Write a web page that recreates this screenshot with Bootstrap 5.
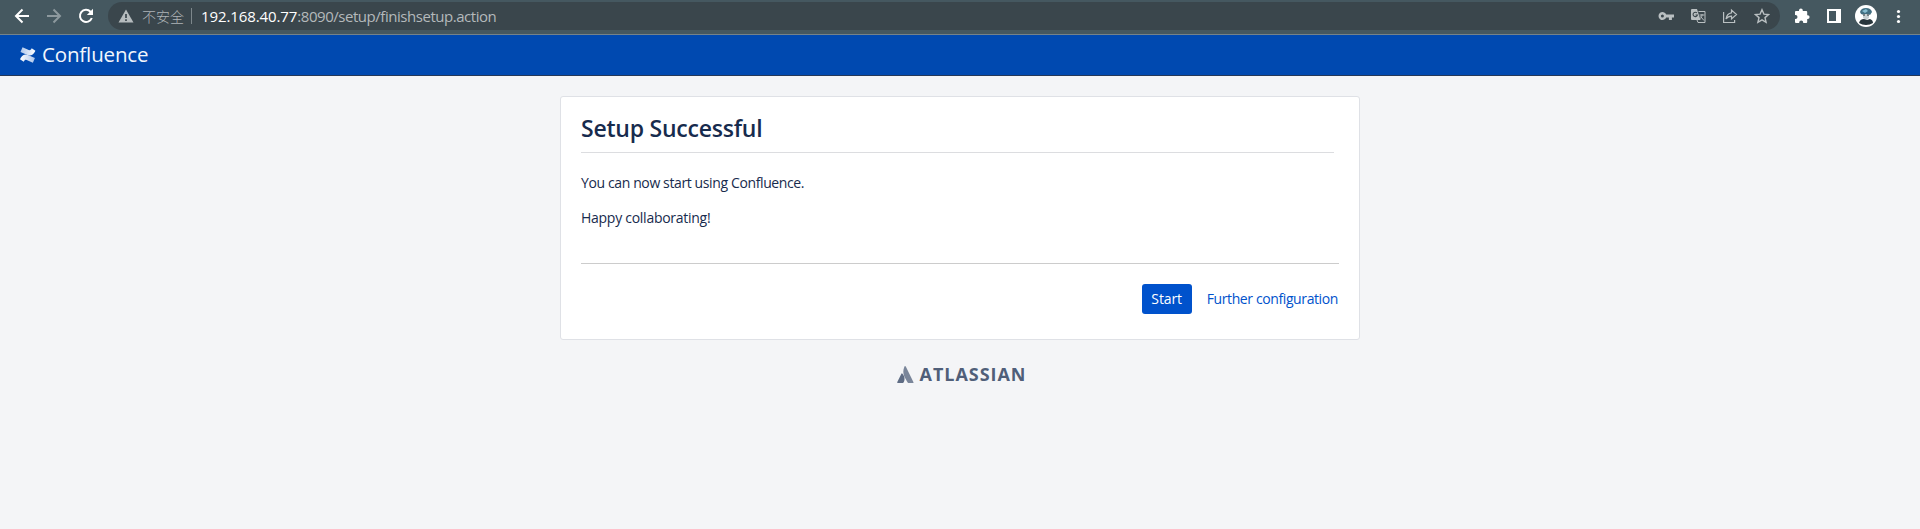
<!DOCTYPE html>
<html lang="en">
<head>
<meta charset="utf-8">
<title>Setup Successful - Confluence</title>
<link href="https://cdn.jsdelivr.net/npm/bootstrap@5.3.0/dist/css/bootstrap.min.css" rel="stylesheet">
<style>
body{font-family:"Open Sans","Noto Sans CJK SC",sans-serif;background:#f4f5f7;color:#172b4d;font-size:14px;line-height:20px;overflow:hidden}
svg{display:block;flex:none}
.toolbar{height:35px;background:#455860;border-bottom:1px solid #74838a;padding-left:14px;padding-bottom:2px}
.omnibox{width:1672px;height:28px;border-radius:14px;background:#3a464c;margin-left:14px;padding:0 10px;color:#b4b9bb;font-size:15px}
.insecure{font-family:"Noto Sans CJK SC",sans-serif;font-size:14px;margin-left:8px;color:#aeb4b7;font-weight:300}
.divider{width:1px;height:16px;background:#7d878b;margin:0 9px 0 7px}
.url{letter-spacing:-.46px;padding-bottom:1px}
.host{color:#fff;letter-spacing:-.1px}
.extensions{margin-left:14px}
.avatar-icon,.menu-icon{margin-left:13px}
.app-header{height:41px;background:#0049b0;border-bottom:1px solid #253858;padding-left:20px;color:#f2f6fc}
.product{font-size:20.5px;letter-spacing:-.15px;margin-left:6px;padding-bottom:2px}
.setup-panel{width:800px;height:244px;margin-top:20px;border:1px solid #dfe1e6;border-radius:3px;padding:0 20px}
.setup-panel h1{font-size:23px;line-height:28px;font-weight:600;letter-spacing:-.23px;margin:17px 5px 0 0;height:39px;border-bottom:1px solid #dcdde0}
.setup-panel p{letter-spacing:-.27px;margin:0 0 15px}
.setup-panel .first-line{padding-top:20px;letter-spacing:-.38px}
.actions{border-top:1px solid #ccc;padding-top:20px;margin-top:35px;padding-right:1px;gap:15px}
.btn-start{width:50px;height:30px;padding:0;font-size:14px;letter-spacing:-.1px;line-height:26px;border-radius:3px;background:#0052cc;color:#fff}
.more{color:#0052cc;letter-spacing:-.39px}
.maker{margin-top:24px;padding-left:3px;color:#505f79;font-size:18px;font-weight:700}
.maker-name{margin-left:6px;letter-spacing:.95px}
</style>
<script src="https://cdn.jsdelivr.net/npm/bootstrap@5.3.0/dist/js/bootstrap.bundle.min.js"></script>
</head>
<body>
<div class="toolbar d-flex align-items-center">
  <svg width="16" height="16" viewBox="0 0 16 16" fill="none" stroke="#fff" stroke-width="2"><path d="M15 8H2M8.500 1.500 2 8l6.500 6.500"/></svg>
  <svg class="ms-3" width="16" height="16" viewBox="0 0 16 16" fill="none" stroke="#8d999e" stroke-width="2"><path d="M1 8h13M7.500 1.500 14 8l-6.500 6.500"/></svg>
  <svg class="ms-3" width="16" height="16" viewBox="0 0 16 16"><path d="M13.800 10a6.100 6.100 0 1 1-1.300-6.300L14 5.200" fill="none" stroke="#fff" stroke-width="2"/><path d="M15 .8V7H8.800z" fill="#fff"/></svg>
  <div class="omnibox d-flex align-items-center">
    <svg width="16" height="16" viewBox="0 0 16 16"><path d="M8 1.500 15.500 14.500H.5z" fill="#b6bcbe"/><path d="M8 6v4M8 11.300v1.700" stroke="#3a464c" stroke-width="1.700"/></svg>
    <span class="insecure">不安全</span><span class="divider"></span>
    <span class="url"><span class="host">192.168.40.77</span>:8090/setup/finishsetup.action</span>
    <div class="d-flex align-items-center gap-3 ms-auto">
      <svg width="16" height="16" viewBox="0 0 16 16"><path fill-rule="evenodd" d="M8.200 6.500a4 4 0 1 0 0 3h2.700V12h3V9.500H16v-3zM4.400 6.500a1.500 1.500 0 1 1 0 3 1.500 1.500 0 0 1 0-3z" fill="#b9bfc1"/></svg>
      <svg width="16" height="16" viewBox="0 0 16 16"><path d="M2 1h5l3.500 11H2a1 1 0 0 1-1-1V2a1 1 0 0 1 1-1z" fill="#b9bfc1"/><path d="M8.500 3.500H15v11H8L7 12M9.500 7h5M12 6v1c0 2-1.500 3.500-2.500 4M10.500 8.500l3.500 4" fill="none" stroke="#b9bfc1"/><path d="M7 5a2.200 2.200 0 1 0 .4 2H5.500" fill="none" stroke="#3a464c" stroke-width="1.100"/></svg>
      <svg width="16" height="16" viewBox="0 0 16 16" fill="none" stroke="#b9bfc1" stroke-width="1.200"><path d="M1.600 4v10.500h11V12M9.500 2v2.800C6 5.300 4.500 7.500 4 11c1.500-2 3.300-2.800 5.500-2.800V11l5-4.500z"/></svg>
      <svg width="16" height="16" viewBox="0 0 16 16"><path d="m8 1.700 1.900 4.400 4.700.4-3.600 3.100 1.100 4.700L8 11.800l-4.100 2.500L5 9.600 1.400 6.500l4.700-.4z" fill="none" stroke="#b9bfc1" stroke-width="1.400"/></svg>
    </div>
  </div>
  <svg class="extensions" width="16" height="16" viewBox="0 0 16 16"><path d="M5 3V2.500a1.900 1.900 0 0 1 3.800 0V3h3.400a1 1 0 0 1 1 1v3.200h.5a1.900 1.900 0 0 1 0 3.800h-.5v3a1 1 0 0 1-1 1H9.200v-.5a2 2 0 0 0-4 0v.5H2a1 1 0 0 1-1-1v-3h.5a2 2 0 0 0 0-4H1V4a1 1 0 0 1 1-1z" fill="#fff"/></svg>
  <svg class="ms-3" width="16" height="16" viewBox="0 0 16 16"><path fill-rule="evenodd" d="M1 1h14v14H1zM3 3v10h7V3z" fill="#fff"/></svg>
  <svg class="avatar-icon" width="22" height="22" viewBox="0 0 22 22"><circle cx="11" cy="11" r="11" fill="#fff"/><path d="M5 7q1-4 6-4t6 4l-2 3-2-1-4 1-3-1z" fill="#426f82"/><path d="M7 6l4-2 2 2-3 2z" fill="#86bdd0"/><path d="M8 9h6v4l-3 2-3-2z" fill="#c7d0d3"/><path d="M8 10h2M12 10h2" stroke="#263238"/><path d="M4 18q1-4 5-4l3 1 3-1q3 1 3 4-3 2-7 2t-7-2z" fill="#27353c"/></svg>
  <svg class="menu-icon" width="16" height="16" viewBox="0 0 16 16" fill="#fff"><circle cx="8.500" cy="3.500" r="1.600"/><circle cx="8.500" cy="8.500" r="1.600"/><circle cx="8.500" cy="13.500" r="1.600"/></svg>
</div>
<header class="app-header d-flex align-items-center">
  <svg width="16" height="16" viewBox="0 0 16 16"><defs><linearGradient id="swoosh"><stop stop-color="#fff"/><stop offset=".9" stop-color="#b4cbed"/></linearGradient></defs><path id="wing" d="M.8 10.800C3.400 6.800 5.800 7 9.100 8.500l5.800 2.600-2 4.700-5.100-2.400c-2-.9-2.900-.8-4.100 1.400L0 12.300z" fill="url(#swoosh)"/><use href="#wing" transform="rotate(180 7.700 8)"/></svg>
  <span class="product">Confluence</span>
</header>
<main class="d-flex flex-column align-items-center">
  <section class="setup-panel bg-white">
    <h1>Setup Successful</h1>
    <p class="first-line">You can now start using Confluence.</p>
    <p>Happy collaborating!</p>
    <div class="actions d-flex justify-content-end align-items-center">
      <button class="btn btn-start">Start</button>
      <a class="more text-decoration-none" href="#">Further configuration</a>
    </div>
  </section>
  <footer class="maker d-flex align-items-center">
    <svg width="17" height="17" viewBox="0 0 17 17"><path d="M8 0q.6 0 .9.700l7.600 15.500q.3.700-.4.700H11.300q-.5 0-.8-.6C8.400 12 4.500 8 7.300 1Q7.600 0 8 0z" fill="#7a869a"/><path d="M4.400 7.700Q4.900 7 5.500 7.800c2.300 2.700 2.600 5.700 1.200 8.500q-.3.600-.9.600H.7q-.8 0-.4-.8z" fill="#5e6c84"/></svg>
    <span class="maker-name">ATLASSIAN</span>
  </footer>
</main>
</body>
</html>
